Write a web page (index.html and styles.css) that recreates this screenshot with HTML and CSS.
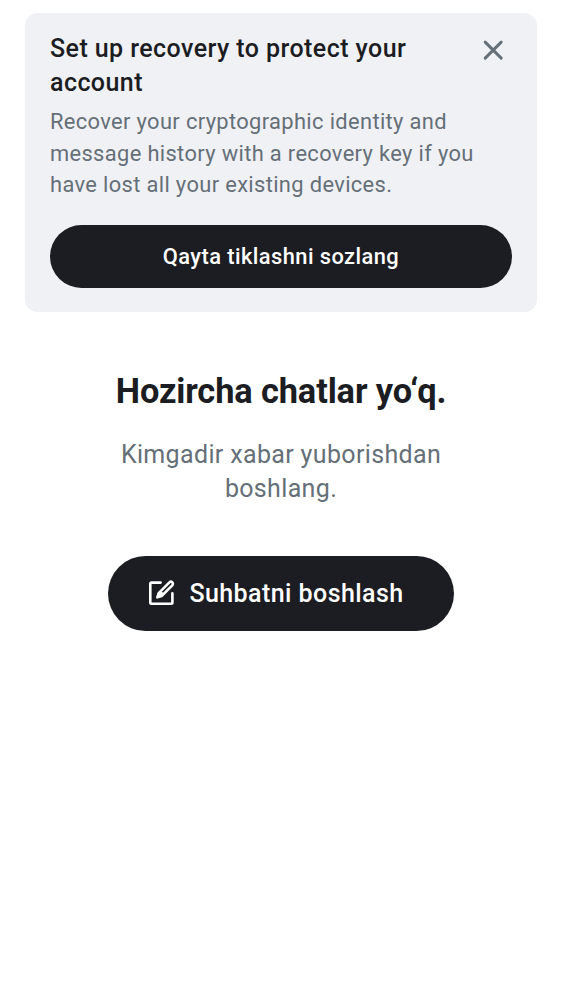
FILE: index.html
```html
<!DOCTYPE html>
<html lang="uz">
<head>
<meta charset="utf-8">
<title>Chats</title>
<link rel="stylesheet" href="styles.css">
</head>
<body>
<section class="banner">
  <div class="banner-head">
    <h2 class="banner-title">Set up recovery to protect your account</h2>
    <button class="close" aria-label="Close"><svg viewBox="0 0 22 22" width="22" height="22"><path d="M3.2 3.1 19.2 19.1M19.2 3.1 3.2 19.1"/></svg></button>
  </div>
  <p class="banner-text">Recover your cryptographic identity and message history with a recovery key if you have lost all your existing devices.</p>
  <button class="banner-action">Qayta tiklashni sozlang</button>
</section>
<main class="empty">
  <h1 class="empty-title">Hozircha chatlar yo‘q.</h1>
  <p class="empty-text">Kimgadir xabar yuborishdan boshlang.</p>
  <button class="start">
    <svg class="compose" viewBox="0 0 31 31" width="31" height="31">
      <path d="M14.6 4.6H5.5Q4.3 4.6 4.3 5.8V24.6Q4.3 25.8 5.5 25.8H25.2Q26.4 25.8 26.4 24.6V15.4"/>
      <path d="M11.3 19.3 12.7 15.1 23.4 4.4A2 2 0 0 1 26.3 7.3L15.6 18Z"/>
      <path class="nib" d="M11.3 19.3 12.7 15.1 15 12.8 17.9 15.7 15.6 18Z"/>
    </svg>
    <span>Suhbatni boshlash</span>
  </button>
</main>
</body>
</html>
```
FILE: styles.css
```css
* { box-sizing: border-box; }
body { margin: 0; padding: 12.5px 25px 0; background: #fff; color: #1b1d22; font-family: Roboto, sans-serif; }
h1, h2, p { margin: 0; }
button { border: 0; padding: 0; font: inherit; }
.banner { height: 299.8px; padding: 19px 25px 24.8px; background: #f0f1f5; border-radius: 12.5px; display: flex; flex-direction: column; }
.banner-head { display: flex; justify-content: space-between; }
.banner-title { width: 390px; font-size: 25px; line-height: 34.4px; font-weight: 500; letter-spacing: .43px; }
.close { width: 22px; height: 22px; margin: 7px 8px 0 0; background: none; }
.close svg { display: block; fill: none; stroke: #656f78; stroke-width: 2.9; stroke-linecap: round; }
.banner-text { margin-top: 6px; width: 440px; font-size: 21.875px; line-height: 31.2px; letter-spacing: .36px; color: #656f78; }
.banner-action { margin-top: auto; height: 62.5px; border-radius: 32px; background: #1b1d22; color: #fff; font-size: 21.875px; font-weight: 500; letter-spacing: .43px; }
.empty { padding-top: 56.8px; display: flex; flex-direction: column; align-items: center; text-align: center; }
.empty-title { font-size: 34.375px; line-height: 44px; font-weight: 700; letter-spacing: -.12px; }
.empty-text { margin-top: 25.2px; width: 360px; font-size: 25px; line-height: 34px; letter-spacing: .35px; color: #656f78; }
.start { margin-top: 50px; width: 346px; height: 75px; border-radius: 38px; display: flex; align-items: center; padding-left: 38px; gap: 12.4px; background: #1b1d22; color: #fff; font-size: 25px; font-weight: 500; letter-spacing: .43px; white-space: nowrap; }
.compose { fill: none; stroke: #fff; stroke-width: 2.6; stroke-linecap: round; stroke-linejoin: round; }
.nib { fill: #fff; stroke: none; }
```
